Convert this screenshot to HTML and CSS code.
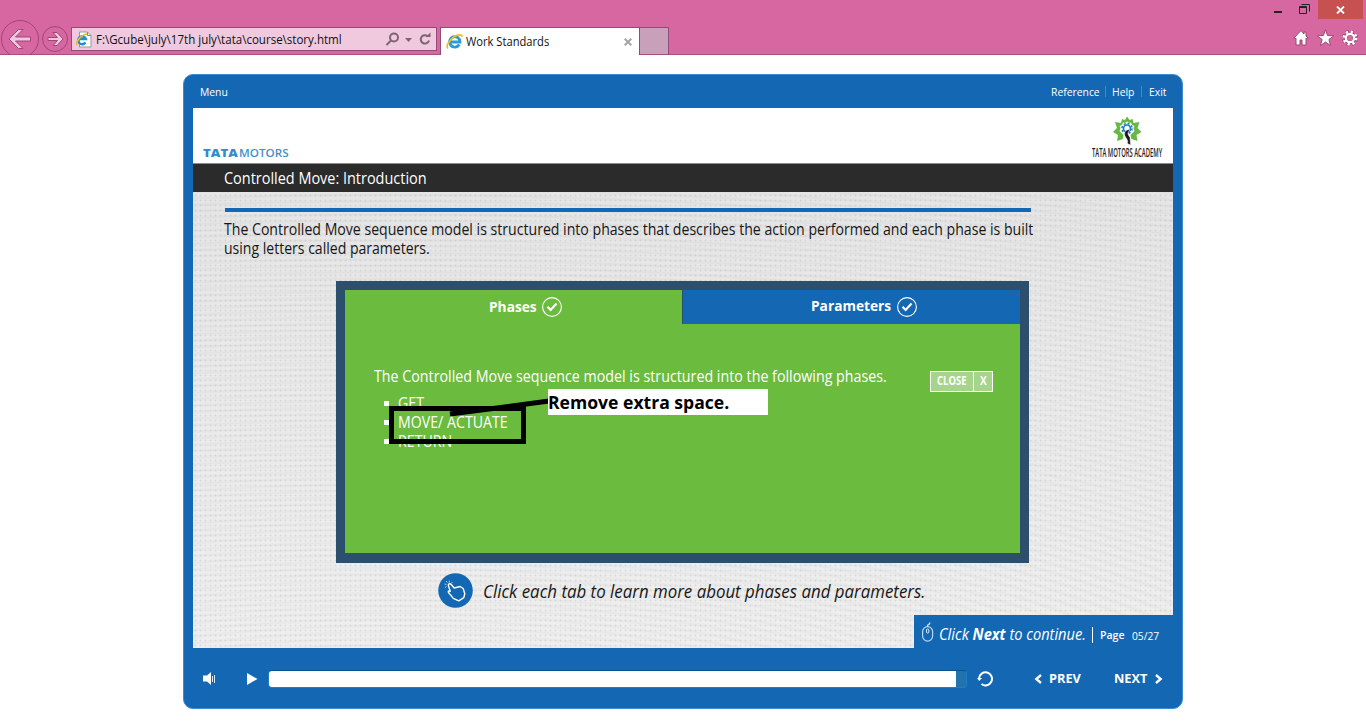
FILE: index.html
```html
<!DOCTYPE html>
<html lang="en">
<head>
<meta charset="utf-8">
<title>Work Standards</title>
<link rel="stylesheet" href="styles.css">
</head>
<body>
<header class="browser">
  <svg class="nav-buttons" width="71" height="36" viewBox="0 19 71 36">
    <g fill="none" stroke="#a04678"><circle cx="20" cy="39" r="18.5"/><circle cx="55" cy="39" r="12.5"/></g>
    <path d="M9 39 18.500 29.500H23L15.500 37H30.500V41H15.500L23 48.500H18.500Z" fill="#f0c8de" stroke="#a04678"/>
    <path d="M63 39 57 32.500H53L57.500 37.500H48V40.500H57.500L53 45.500H57Z" fill="#f0c8de" stroke="#a04678"/>
  </svg>
  <div class="address">
    <svg width="16" height="17" viewBox="0 0 16 17"><path d="M3.500 1h8l3.500 3.500V16H3.500Z" fill="#fff" stroke="#999"/><path d="M11.500 1v3.500H15" fill="none" stroke="#888"/><path d="M9.500 11.500A4 4 0 1 1 10 8H3" fill="none" stroke="#1b91d0" stroke-width="2.300"/><path d="M1 14C-1 11 6 3 11 3" fill="none" stroke="#edbd21" stroke-width="1.600"/></svg>
    <span class="url"><span class="fit">F:\Gcube\july\17th july\tata\course\story.html</span></span>
    <svg class="address-tools" width="48" height="18" viewBox="0 0 48 18"><g fill="none" stroke="#80637b" stroke-width="2"><circle cx="9" cy="7.500" r="4"/><path d="m6 10.500-4.500 4.500"/><path d="M42.500 6A4.200 4.200 0 1 0 44 10.500"/></g><path d="M20 8h7l-3.500 4ZM40.500 7h5V2.500Z" fill="#80637b"/></svg>
  </div>
  <div class="tab">
    <svg width="17" height="17" viewBox="0 0 17 17"><path d="M13.300 11.500A5.200 5.200 0 1 1 14 9H5" fill="none" stroke="#2a9ad8" stroke-width="2.900"/><path d="M2 15.500C-1.500 12 8 1 15 2c1 0 1 1 .5 2" fill="none" stroke="#edbd21" stroke-width="1.700"/></svg>
    <span class="tab-name"><span class="fit">Work Standards</span></span>
    <svg width="8" height="8" viewBox="0 0 8 8"><path d="m.7.7 6.600 6.600m0-6.600L.7 7.300" stroke="#a5a5a5" stroke-width="2"/></svg>
  </div>
  <div class="new-tab"></div>
  <div class="window-area">
    <div class="window-controls">
      <svg width="45" height="19" viewBox="0 0 45 19"><path d="M1 11h8v2H1Z" fill="#222"/><path d="M26.500 6.500h7v7h-7Zm2-2h8v7" fill="none" stroke="#222"/><path d="M26 7.500h8" stroke="#222"/></svg>
      <div class="window-close"><svg width="9" height="8" viewBox="0 0 9 8"><path d="m1 .5 7 7m0-7-7 7" stroke="#fff" stroke-width="1.800"/></svg></div>
    </div>
    <svg class="toolbar" width="66" height="18" viewBox="0 0 66 18"><g fill="#fff" stroke="#9d4777"><path d="M8 1.500.800 9.200H3V16h4v-5h2v5h4V9.200h2.200L13 7V3h-2v2Z"/><path d="m32.500.8 2.100 5.700 6.200.3-4.900 3.700 1.700 6.100-5.100-3.500-5.100 3.500 1.700-6.100-4.900-3.700 6.200-.3Z"/></g><g transform="translate(57 9)" fill="none"><circle r="6.300" stroke="#9d4777" stroke-width="3.500" stroke-dasharray="3 1.950"/><circle r="4.500" stroke="#9d4777" stroke-width="3.500"/><circle r="6.200" stroke="#fff" stroke-width="2.600" stroke-dasharray="2.200 2.670"/><circle r="4.200" stroke="#fff" stroke-width="2.200"/></g></svg>
  </div>
</header>

<main class="player">
  <nav class="player-top">
    <span class="menu"><span class="fit">Menu</span></span>
    <span class="reference"><span class="fit">Reference</span></span><i></i>
    <span class="help"><span class="fit">Help</span></span><i></i>
    <span class="exit"><span class="fit">Exit</span></span>
  </nav>
  <section class="stage">
    <header class="brand">
      <div class="brand-name"><b class="fit tata">TATA</b><span class="fit motors">MOTORS</span></div>
      <div class="academy">
        <svg width="30" height="30" viewBox="0 0 30 30"><path fill-rule="evenodd" d="m11 23-6 2 1-6-5-3 4-4-2-6 6 1 1-4 3 1L15 .5 17.500 4l3-1 1 4 6-1-2 6 4 4-5 3 1 6-6-2-1-4 2-2 2-2-1-3 1-2-2.500-1-1-2.500-2 .5-2-1.500-2 1.500-2-.5-1 2.500L7.500 10l1 2-1 3 2 2 2 2Z" fill="#65b943"/><circle cx="15" cy="12.500" r="3.500" fill="none" stroke="#1a7cc4" stroke-width="1.700"/><circle cx="15" cy="12.500" r="5" fill="none" stroke="#1a7cc4" stroke-width="1.600" stroke-dasharray="2 1.927"/><path d="M13 16c1-2 3-2.500 5-2-3.500 3-2 4.500 0 7.500l.5 7.500-3-1.500C17 22 11 21.500 13 16Z" fill="#161616" stroke="#fff" stroke-width=".4"/></svg>
        <div class="academy-name"><span class="fit">TATA MOTORS ACADEMY</span></div>
      </div>
    </header>
    <h1 class="title"><span class="fit">Controlled Move: Introduction</span></h1>
    <div class="lesson">
      <div class="rule"></div>
      <p class="intro"><span class="fit intro-first">The Controlled Move sequence model is structured into phases that describes the action performed and each phase is built</span><br><span class="fit intro-second">using letters called parameters.</span></p>
      <div class="box">
        <div class="box-tabs">
          <div class="box-tab phases"><span class="tab-label"><span class="fit">Phases</span></span><svg width="20" height="20" viewBox="0 0 20 20"><circle cx="10" cy="10" r="9.400" fill="none" stroke="#fff" stroke-width="1.100"/><path d="m5.500 9.700 3.100 3.300 6-6.500" fill="none" stroke="#fff" stroke-width="2.200"/></svg></div>
          <div class="box-tab parameters"><span class="tab-label"><span class="fit">Parameters</span></span><svg width="20" height="20" viewBox="0 0 20 20"><circle cx="10" cy="10" r="9.400" fill="none" stroke="#fff" stroke-width="1.100"/><path d="m5.500 9.700 3.100 3.300 6-6.500" fill="none" stroke="#fff" stroke-width="2.200"/></svg></div>
        </div>
        <div class="box-body">
          <div class="phase-text">
            <p class="phase-intro"><span class="fit">The Controlled Move sequence model is structured into the following phases.</span></p>
            <ul><li><span class="fit">GET</span></li><li><span class="fit">MOVE/ ACTUATE</span></li><li><span class="fit">RETURN</span></li></ul>
          </div>
          <div class="close"><span class="close-word"><span class="fit">CLOSE</span></span><span class="close-x"><span class="fit">X</span></span></div>
        </div>
      </div>
      <div class="prompt">
        <svg width="35" height="35" viewBox="0 0 35 35"><circle cx="17.500" cy="17.500" r="17.300" fill="#1467b3"/><path d="M10.500 13c-.8-1.800 1.300-3.200 2.700-1.500l3 3.500 6-1.500 3 2 1.600 5.200-1 4-5 3.200-5.500-2.500-4-5c-1-.5-1.500-2-.5-2.500l1.500.5Z" fill="none" stroke="#fff" stroke-width="1.400" stroke-linejoin="round"/><path d="m7 14.500 1.500-1M6.500 11l2 .4M8 8l1.500 1.500M11.300 7.500v2M14.500 9l-1 1.300" stroke="#a9cdec"/></svg>
        <span class="prompt-text"><span class="fit">Click each tab to learn more about phases and parameters.</span></span>
      </div>
    </div>
    <footer class="page-status">
      <svg width="14" height="20" viewBox="0 0 14 20"><rect x="1.600" y="4.600" width="10" height="14.500" rx="5" fill="none" stroke="#b8d9f4" stroke-width="1.200"/><rect x="5.500" y="7" width="2.300" height="4" rx="1" fill="none" stroke="#d6eafa"/><path d="M6.600 5C6 1.500 8 4 9 .5" fill="none" stroke="#c6e2f8" stroke-width="1.300"/></svg>
      <span class="continue"><span class="fit">Click <b>Next</b> to continue.</span></span>
      <i></i><span class="page"><span class="fit">Page</span></span><span class="count"><span class="fit">05/27</span></span>
    </footer>
  </section>
  <footer class="controls">
    <svg class="sound" width="14" height="16" viewBox="0 0 14 16"><path d="M0 4.500h4L8 1v13l-4-3.500H0Z" fill="#fff"/><path d="M9.500 5v6M11.500 4v8" stroke="#d9e9f7" stroke-width="1"/></svg>
    <svg class="play" width="11" height="12" viewBox="0 0 11 12"><path d="M0 0v12L10.500 6Z" fill="#fff"/></svg>
    <div class="seek"><div></div></div>
    <svg class="replay" width="16" height="16" viewBox="0 0 16 16"><path d="M2 7.500A6.500 6.500 0 1 1 4.500 13" fill="none" stroke="#fff" stroke-width="2"/><path d="M0 7h5l-2.800 3Z" fill="#fff"/></svg>
    <svg class="prev-arrow" width="8" height="10" viewBox="0 0 8 10"><path d="M7 1 2.300 5 7 9" fill="none" stroke="#fff" stroke-width="2.300"/></svg>
    <span class="prev"><span class="fit">PREV</span></span>
    <span class="next"><span class="fit">NEXT</span></span>
    <svg class="next-arrow" width="8" height="10" viewBox="0 0 8 10"><path d="m1 1 4.700 4L1 9" fill="none" stroke="#fff" stroke-width="2.300"/></svg>
  </footer>
</main>

<aside class="annotation">
  <svg width="379" height="55" viewBox="0 0 379 55"><path d="M2.500 19.500h132v33H2.500Z" fill="none" stroke="#000" stroke-width="5"/><path d="m61 25 47-6 52-7" fill="none" stroke="#000" stroke-width="5"/></svg>
  <p><span class="fit">Remove extra space.</span></p>
</aside>
</body>
</html>
```
FILE: styles.css
```css
* { box-sizing: border-box; }
body { margin: 0; width: 1366px; height: 728px; overflow: hidden; background: #fff; font-family: "Open Sans", "Noto Sans", sans-serif; }
p, h1, ul { margin: 0; padding: 0; font-weight: normal; }
svg { display: block; flex: none; }
.fit { display: inline-block; white-space: nowrap; transform-origin: left center; }

.browser { height: 55px; display: flex; align-items: flex-end; background: #d667a1; border-bottom: 1px solid #a9507f; color: #111; }
.nav-buttons { margin-bottom: -1px; }
.address { width: 366px; height: 24px; margin-bottom: 3px; border: 1px solid #914b74; background: #f0c9df; display: flex; align-items: center; padding-left: 4px; }
.url { width: 289px; margin-left: 4px; font-size: 12px; }
.url .fit { transform: scaleX(.961); }
.tab { width: 200px; height: 28px; margin-left: 3px; border: 1px solid #914b74; border-bottom: 0; margin-bottom: -1px; background: #fff; display: flex; align-items: center; padding-left: 5px; }
.tab-name { width: 161px; padding-left: 3px; font-size: 12px; }
.tab-name .fit { transform: scaleX(.93); }
.new-tab { width: 29px; height: 27px; background: #c9a0b9; border: 1px solid #914b74; border-left: 0; border-bottom: 0; }
.window-area { margin-left: auto; height: 54px; display: flex; flex-direction: column; align-items: flex-end; }
.window-controls { display: flex; padding-right: 3px; }
.window-close { width: 45px; height: 19px; background: #c75050; display: flex; align-items: center; justify-content: center; }
.toolbar { margin: 10px 7px 0 0; }

.player { width: 1000px; height: 635px; margin: 19px 0 0 183px; border-radius: 10px; background: #1467b3; border: 1px solid #3d8bcf; padding: 0 9px; color: #fff; }
.player-top { height: 33px; display: flex; align-items: center; padding: 0 0 1px 7px; font-size: 11.500px; font-weight: 500; }
.player-top .fit { transform: scaleX(.9); }
.menu { width: 851px; }
.reference { width: 48px; }
.help { width: 23px; }
.exit { width: 20px; }
.player-top i { width: 1px; height: 11px; margin: 0 6px; background: #4189c9; }
.player-top i + span + i { margin: 0 7px 0 6px; }
.stage {
  height: 540px;
  display: flex;
  flex-direction: column;
  background-color: #e6e6e6;
  background-image:
    radial-gradient(circle, rgba(125,125,125,.16) .7px, transparent 1.3px),
    repeating-radial-gradient(ellipse 120% 70% at 20% 130%, rgba(255,255,255,.18) 0 6px, rgba(205,205,205,.1) 13px, rgba(255,255,255,.18) 20px),
    linear-gradient(180deg, #e0e0e0 15%, #e6e6e6 55%, #ebebeb 100%);
  background-size: 5px 5px, 100% 100%, 100% 100%;
}
.brand { height: 55px; background: #fff; display: flex; justify-content: space-between; padding: 8px 9px 0 10px; }
.brand-name { display: flex; padding-top: 29px; color: #4090ce; font-size: 11px; line-height: 15px; font-weight: 600; }
.tata { width: 36px; font-weight: 800; color: #338bcb; transform: scaleX(1.2); }
.motors { transform: scaleX(1.06); }
.academy { width: 72px; display: flex; flex-direction: column; }
.academy svg { margin-left: 20px; }
.academy-name { width: 72px; color: #222; font-size: 12.500px; line-height: 13px; font-weight: 600; }
.academy-name .fit { transform: scaleX(.468); }
.title { height: 29px; background: #2b2b2b; border-top: 1px solid #8b8b8b; padding: 4px 0 0 31px; font-size: 16px; line-height: 20px; }
.title .fit { transform: scaleX(.903); }
.lesson { height: 423px; padding: 16px 0 0 31px; }
.rule { width: 806px; height: 4px; margin-left: 1px; background: #1467b3; }
.intro { height: 69px; padding-top: 8px; color: #171717; font-size: 15.500px; line-height: 19px; }
.intro-first { transform: scaleX(.91); }
.intro-second { transform: scaleX(.906); }
.box { width: 693px; height: 282px; margin-left: 112px; background: #6bbb3e; border: 9px solid #2c4f6e; border-bottom-width: 10px; }
.box-tabs { display: flex; height: 34px; font-size: 15px; font-weight: 700; }
.box-tab { display: flex; }
.box-tab svg { margin-top: 7px; }
.phases { width: 337px; padding-left: 144px; }
.parameters { width: 338px; padding-left: 128px; background: #1467b3; border-left: 1px solid #2c4f6e; }
.tab-label { line-height: 20px; }
.phases .tab-label { width: 53px; padding-top: 6px; }
.parameters .tab-label { width: 86px; padding-top: 5px; }
.tab-label .fit { transform: scaleX(.915); }
.box-body { display: flex; justify-content: space-between; padding: 43px 27px 0 29px; }
.phase-text { width: 514px; font-size: 15.500px; line-height: 19px; }
.phase-text .fit { transform: scaleX(.92); }
.phase-text ul { list-style: none; padding-top: 8px; }
.phase-text li { display: flex; align-items: center; padding-left: 10px; height: 19px; }
.phase-text li::before { content: ""; width: 5px; height: 5px; margin-right: 9px; background: #fff; }
.phase-text li .fit { transform: scaleX(.915); }
.close { width: 63px; height: 21px; margin-top: 4px; border: 1px solid #fff; background: #a5d58a; display: flex; font-size: 12px; font-weight: 700; line-height: 18px; }
.close-word { width: 43px; padding-left: 6px; border-right: 1px solid #fff; }
.close-word .fit { transform: scaleX(.79); }
.close-x { padding-left: 6px; }
.close-x .fit { transform: scaleX(.85); }
.prompt { height: 35px; display: flex; margin: 10px 0 0 214px; color: #181818; font-size: 18px; font-style: italic; align-items: center; }
.prompt-text { padding-left: 10px; }
.prompt-text .fit { transform: scaleX(.937); }
.page-status { width: 259px; height: 33px; margin: auto 0 0 auto; background: #1467b3; display: flex; align-items: center; padding: 6px 0 0 7px; }
.page-status > svg { margin-bottom: 6px; }
.continue { width: 147px; margin: -1px 0 0 4px; font-size: 16px; font-style: italic; }
.continue .fit { transform: scaleX(.915); }
.page-status i { width: 1px; height: 16px; margin: 0 7px 0 6px; background: #fff; }
.page { width: 32px; font-size: 11px; font-weight: 600; }
.page .fit { transform: scaleX(.96); }
.count { font-size: 11px; font-weight: 500; padding-top: 1px; }
.count .fit { transform: scaleX(.93); }
.controls { height: 60px; display: flex; align-items: center; padding: 1px 0 0 10px; font-size: 13px; font-weight: 700; }
.play { margin-left: 30px; }
.seek { width: 699px; height: 18px; margin-left: 10px; border: 1px solid #247bc3; border-top-color: #0c508e; border-radius: 4px; overflow: hidden; background: #2173ae; }
.seek div { width: 687px; height: 16px; background: #fff; }
.replay { margin-left: 10px; }
.prev-arrow { margin-left: 41px; }
.prev { width: 72px; padding-left: 7px; margin-top: -1px; }
.next { width: 40px; margin-top: -1px; }
.prev .fit, .next .fit { transform: scaleX(.98); }
.next-arrow { margin-left: 1px; }
.annotation { position: absolute; left: 389px; top: 389px; width: 379px; height: 55px; color: #000; }
.annotation p { position: absolute; left: 159px; top: 0; width: 220px; height: 26px; background: #fff; font-size: 18px; line-height: 26px; font-weight: 700; }
.annotation .fit { transform: scaleX(.976); }
```
